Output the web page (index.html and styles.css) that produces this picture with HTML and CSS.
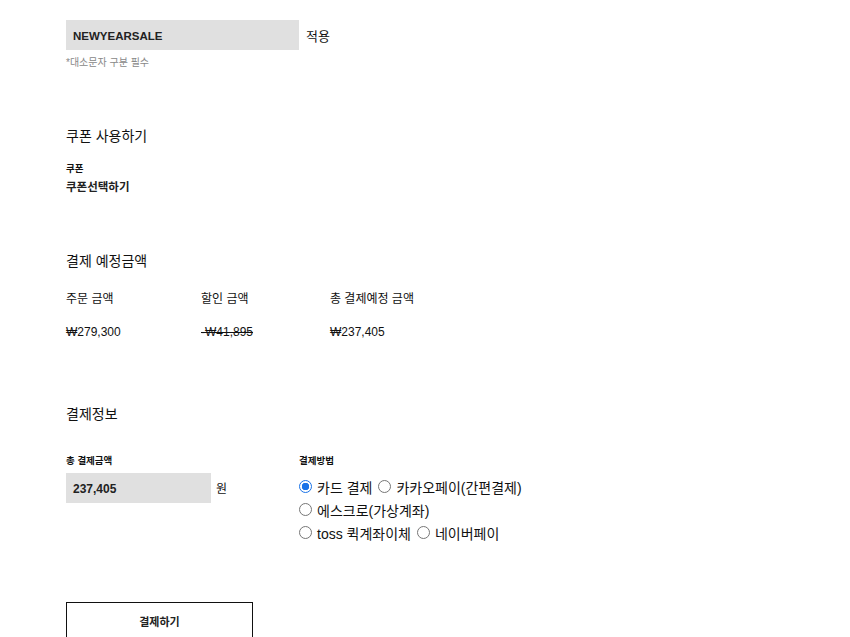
FILE: index.html
```html
<!DOCTYPE html>
<html lang="ko">
<head>
<meta charset="utf-8">
<link rel="stylesheet" href="styles.css">
</head>
<body>
<div class="page">
  <div class="promo">
    <div class="promo-row">
      <div class="field code">NEWYEARSALE</div>
      <span class="apply">적용</span>
    </div>
    <p class="hint">*대소문자 구분 필수</p>
  </div>

  <section class="coupon">
    <h2 class="title">쿠폰 사용하기</h2>
    <div class="label">쿠폰</div>
    <div class="coupon-select">쿠폰선택하기</div>
  </section>

  <section class="expected">
    <h2 class="title">결제 예정금액</h2>
    <div class="amounts">
      <div class="col c1"><div class="head">주문 금액</div><div class="val">₩279,300</div></div>
      <div class="col c2"><div class="head">할인 금액</div><div class="val strike">-₩41,895</div></div>
      <div class="col c3"><div class="head">총 결제예정 금액</div><div class="val">₩237,405</div></div>
    </div>
  </section>

  <section class="payinfo">
    <h2 class="title">결제정보</h2>
    <div class="pay-grid">
      <div class="total">
        <div class="label">총 결제금액</div>
        <div class="total-row">
          <div class="field amount">237,405</div>
          <span class="won">원</span>
        </div>
      </div>
      <div class="methods">
        <div class="label">결제방법</div>
        <div class="radio-line">
          <label class="radio"><span class="dot checked"></span>카드 결제</label>
          <label class="radio"><span class="dot"></span>카카오페이(간편결제)</label>
        </div>
        <div class="radio-line">
          <label class="radio"><span class="dot"></span>에스크로(가상계좌)</label>
        </div>
        <div class="radio-line">
          <label class="radio"><span class="dot"></span>toss 퀵계좌이체</label>
          <label class="radio"><span class="dot"></span>네이버페이</label>
        </div>
      </div>
    </div>
  </section>

  <button class="pay-btn">결제하기</button>
</div>
</body>
</html>
```

FILE: styles.css
```css
html, body {
  margin: 0;
  padding: 0;
  background: #fff;
}
body {
  font-family: "Liberation Sans", "Noto Sans CJK KR", sans-serif;
  color: #111;
  overflow: hidden;
}
.page {
  padding: 20px 0 0 66px;
}
.promo-row {
  display: flex;
  align-items: center;
  gap: 7px;
}
.field {
  background: #e0e0e0;
  height: 30px;
  box-sizing: border-box;
  display: flex;
  align-items: center;
  padding-left: 7px;
  padding-top: 2px;
  font-size: 12px;
  font-weight: bold;
  color: #222;
}
.code { width: 233px; font-size: 11.5px; }
.apply { font-size: 13px; color: #111; }
.hint {
  margin: 4px 0 0;
  font-size: 10px;
  color: #888;
}
.title {
  margin: 0;
  font-size: 14px;
  font-weight: normal;
  color: #111;
}
.coupon { margin-top: 56px; }
.label {
  font-size: 9.5px;
  font-weight: bold;
  color: #111;
}
.coupon .label { margin-top: 16px; }
.coupon-select {
  margin-top: 3px;
  font-size: 11.5px;
  font-weight: bold;
  color: #222;
}
.expected { margin-top: 56px; }
.amounts {
  display: flex;
  margin-top: 19px;
}
.col .head { font-size: 12px; color: #111; }
.col .val { font-size: 12px; margin-top: 19px; color: #111; }
.c1 { width: 135px; }
.c2 { width: 129px; }
.strike { text-decoration: line-through; }
.payinfo { margin-top: 64px; }
.pay-grid {
  display: flex;
  margin-top: 30px;
}
.total { width: 233px; }
.total-row {
  display: flex;
  align-items: flex-start;
  gap: 5px;
  margin-top: 6px;
}
.amount { width: 145px; }
.won { font-size: 12px; margin-top: 6px; }
.methods .label { margin-bottom: 8px; }
.radio-line {
  display: flex;
  gap: 6px;
  height: 23px;
  align-items: center;
}
.radio {
  display: flex;
  align-items: center;
  gap: 5px;
  font-size: 14px;
  color: #111;
}
.dot {
  width: 13px;
  height: 13px;
  border: 1px solid #767676;
  border-radius: 50%;
  box-sizing: border-box;
  display: inline-block;
  background: #fff;
}
.dot.checked {
  border: 1px solid #1a73e8;
  background: radial-gradient(circle, #1a73e8 0 3.5px, #fff 4px);
}
.pay-btn {
  display: flex;
  align-items: center;
  justify-content: center;
  margin-top: 58px;
  width: 187px;
  height: 40px;
  background: #fff;
  border: 1px solid #111;
  font-family: inherit;
  font-size: 11px;
  font-weight: bold;
  color: #222;
  padding: 0 0 2px;
}
```
